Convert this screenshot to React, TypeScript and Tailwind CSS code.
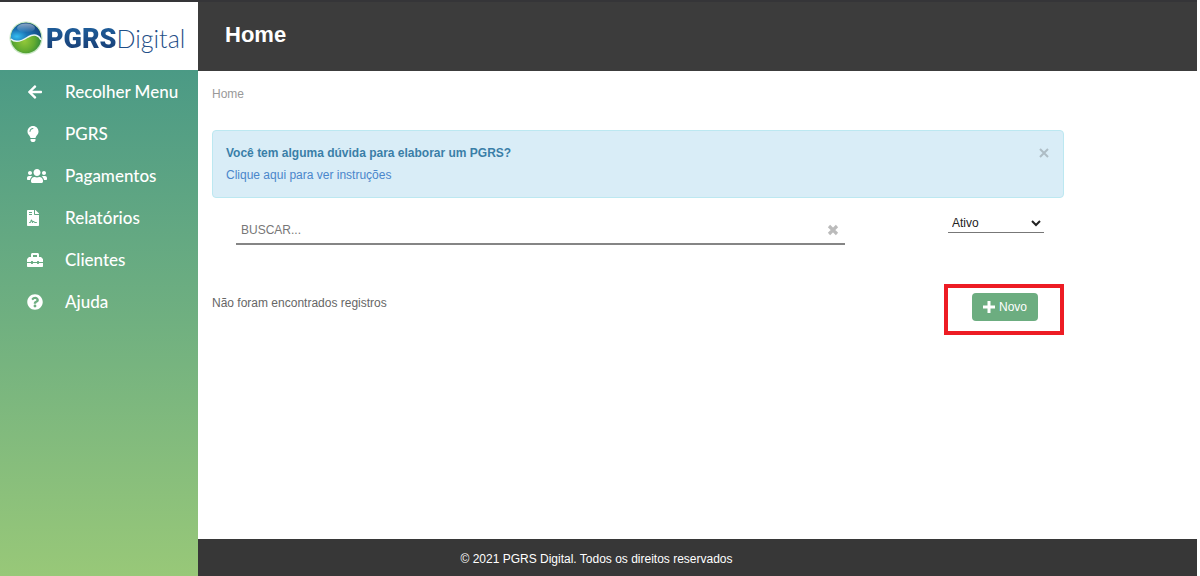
import { useState } from "react";
import type { IconType } from "react-icons";
import {
  FaArrowLeft,
  FaFileContract,
  FaLightbulb,
  FaQuestionCircle,
  FaToolbox,
  FaUsers,
} from "react-icons/fa";

const menu: { label: string; icon: IconType; size: string }[] = [
  { label: "Recolher Menu", icon: FaArrowLeft, size: "h-4 w-4" },
  { label: "PGRS", icon: FaLightbulb, size: "h-4 w-3" },
  { label: "Pagamentos", icon: FaUsers, size: "h-4 w-5" },
  { label: "Relatórios", icon: FaFileContract, size: "h-4 w-3" },
  { label: "Clientes", icon: FaToolbox, size: "h-4 w-4" },
  { label: "Ajuda", icon: FaQuestionCircle, size: "h-4 w-4" },
];

function Globe() {
  return (
    <svg viewBox="0 0 34 34" className="size-[34px] shrink-0" aria-hidden="true">
      <defs>
        <radialGradient id="sky" cx="0.2" cy="0.75" r="0.9">
          <stop offset="0" stopColor="#35bdf0" />
          <stop offset="0.4" stopColor="#1a72b4" />
          <stop offset="1" stopColor="#123f78" />
        </radialGradient>
        <radialGradient id="land" cx="0.45" cy="0.6" r="0.55">
          <stop offset="0" stopColor="#93c83a" />
          <stop offset="0.6" stopColor="#62ab30" />
          <stop offset="1" stopColor="#2f8a3a" />
        </radialGradient>
        <linearGradient id="shine" x1="0" y1="0" x2="0" y2="1">
          <stop offset="0" stopColor="#fff" stopOpacity="0.5" />
          <stop offset="1" stopColor="#fff" stopOpacity="0" />
        </linearGradient>
      </defs>
      <circle cx="17" cy="17" r="16.5" fill="#c9e6c4" />
      <circle cx="17" cy="17" r="15.2" fill="url(#land)" />
      <path d="M1.800 18A15.200 15.200 0 1 1 32 19C30 14 25 12.500 19 16C13 20 6 22 1.800 18Z" fill="url(#sky)" />
      <path d="M1.800 18C6 22 13 20 19 16C25 12.500 30 14 32 19" fill="none" stroke="#e8f5f5" strokeWidth="1.500" />
      <ellipse cx="17" cy="7" rx="9" ry="4.500" fill="url(#shine)" />
    </svg>
  );
}

export default function App() {
  const [alertOpen, setAlertOpen] = useState(true);
  const [query, setQuery] = useState("");

  return (
    <div className="flex min-h-screen bg-white pr-[3px] font-['Liberation_Sans',Arial,sans-serif] text-[12px] text-[#666]">
      <aside className="flex w-[198px] shrink-0 flex-col bg-[#353538] pt-[2px]">
        <a href="#" aria-label="PGRS Digital" className="flex h-[68px] items-center gap-[3px] bg-white pt-1 pl-[9px]">
          <Globe />
          <span className="flex items-baseline leading-8">
            <span className="bg-linear-to-b from-[#1f62a0] to-[#17396f] bg-clip-text font-[Roboto,sans-serif] text-[27px] font-black text-transparent">
              PGRS
            </span>
            <span className="font-[Lato,sans-serif] text-[25px] font-light text-[#1f4f88]">Digital</span>
          </span>
        </a>
        <nav className="flex-1 bg-linear-to-b from-[#4b9a85] via-[#70b080] to-[#98c878] pt-px">
          <ul>
            {menu.map(({ label, icon: Icon, size }) => (
              <li key={label}>
                <a href="#" className="flex h-[42px] items-center pl-[27px] text-white">
                  <span className="w-[38px]">
                    <Icon className={size} />
                  </span>
                  <span className="font-[Lato,sans-serif] text-[17px] font-medium">{label}</span>
                </a>
              </li>
            ))}
          </ul>
        </nav>
      </aside>

      <div className="flex min-w-0 flex-1 flex-col">
        <header className="flex h-[71px] items-center border-t-2 border-[#353538] bg-[#3c3c3c] px-[27px] pb-1">
          <h1 className="text-[22px] leading-7 font-bold text-white">Home</h1>
        </header>

        <main className="flex-1 pt-3 pr-[133px] pl-[14px]">
          <nav aria-label="Breadcrumb" className="leading-[22px] text-[#999]">
            <a href="#">Home</a>
          </nav>

          {alertOpen && (
            <div role="alert" className="mt-[25px] flex items-start justify-between rounded border border-[#bce8f1] bg-[#d9edf7] px-[13px] pt-[11px] pb-[11px] leading-[22px]">
              <div>
                <strong className="block font-bold text-[#3a7fa8]">
                  Você tem alguma dúvida para elaborar um PGRS?
                </strong>
                <a href="#" className="text-[#4a86cb]">Clique aqui para ver instruções</a>
              </div>
              <button type="button" aria-label="Fechar" onClick={() => setAlertOpen(false)} className="flex h-[22px] items-center text-[#aebdc5]">
                <svg viewBox="0 0 12 12" className="size-3" aria-hidden="true">
                  <path d="M2 2L10 10M10 2L2 10" stroke="currentColor" strokeWidth="2" />
                </svg>
              </button>
            </div>
          )}

          <div className="mt-4 flex items-start justify-between pr-5 pl-6">
            <div className="mr-[103px] flex h-[31px] flex-1 items-center border-b-2 border-[#858585] pt-0.5 pr-1.5 pl-[5px]">
              <input
                type="text"
                aria-label="Buscar"
                placeholder="BUSCAR..."
                value={query}
                onChange={(e) => setQuery(e.target.value)}
                className="min-w-0 flex-1 outline-none placeholder:text-[#777]"
              />
              <button type="button" aria-label="Limpar busca" onClick={() => setQuery("")} className="text-[#bbb]">
                <svg viewBox="0 0 12 12" className="size-3" aria-hidden="true">
                  <path d="M2 2L10 10M10 2L2 10" stroke="currentColor" strokeWidth="3.200" />
                </svg>
              </button>
            </div>
            <select aria-label="Situação" className="h-[19px] w-24 border-b border-[#777] text-[#222]">
              <option>Ativo</option>
              <option>Inativo</option>
            </select>
          </div>

          <div className="mt-[39px] flex items-start justify-between">
            <p className="mt-2 leading-[22px]">Não foram encontrados registros</p>
            <div className="border-4 border-[#ed1c24] pt-[5px] pr-[22px] pb-[10px] pl-6">
              <button type="button" className="flex h-7 w-[66px] items-center justify-center gap-1 rounded bg-[#6cad80] text-white">
                <svg viewBox="0 0 12 12" className="size-3" aria-hidden="true">
                  <path d="M6 0V12M0 6H12" stroke="currentColor" strokeWidth="3" />
                </svg>
                Novo
              </button>
            </div>
          </div>
        </main>

        <footer className="flex h-[37px] items-center justify-center bg-[#373737] pt-0.5 pr-[202px] text-white">
          © 2021 PGRS Digital. Todos os direitos reservados
        </footer>
      </div>
    </div>
  );
}
